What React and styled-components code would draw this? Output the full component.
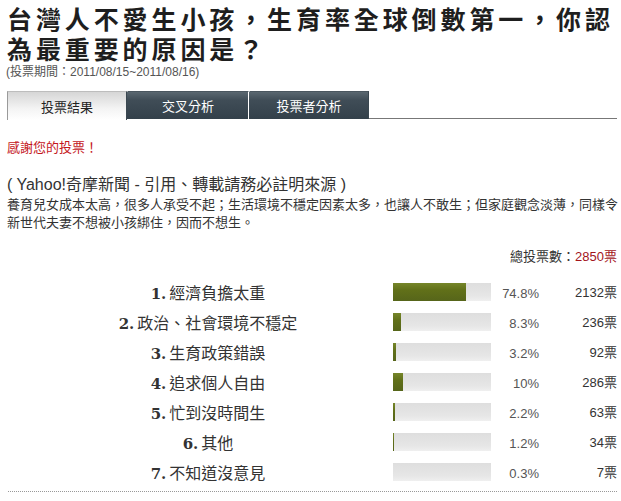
import React from "react";
import styled, { createGlobalStyle } from "styled-components";

const Global = createGlobalStyle`
  html, body { margin: 0; padding: 0; background: #fff; }
  body { font-family: "Liberation Sans", Arial, "Noto Sans CJK TC", sans-serif; color: #333; }
`;

const CJK = `"Liberation Sans", Arial, "Noto Sans CJK TC", sans-serif`;

const Page = styled.div`
  width: 621px;
  height: 501px;
  box-sizing: border-box;
  padding: 3px 4px 0 7px;
  overflow: hidden;
`;

const Title = styled.h1`
  margin: 0;
  width: 610px;
  font-family: "Noto Sans CJK TC", sans-serif;
  font-weight: 700;
  font-size: 25px;
  line-height: 30px;
  letter-spacing: 3.9px;
  color: #1e1e1e;
  word-break: break-all;
`;

const Line = styled.span`
  display: block;
  white-space: nowrap;
`;

const Period = styled.div`
  margin-top: 1px;
  font-family: ${CJK};
  font-size: 12px;
  line-height: 16px;
  color: #555;
  margin-left: -1px;
`;

const Tabs = styled.div`
  display: flex;
  margin-top: 11px;
  height: 29px;
`;

const Tab = styled.div`
  width: ${(p) => p.$w}px;
  box-sizing: border-box;
  display: flex;
  align-items: center;
  justify-content: center;
  font-family: ${CJK};
  font-size: 13px;
  color: ${(p) => (p.$active ? "#222" : "#fff")};
  background: ${(p) =>
    p.$active
      ? "linear-gradient(#d6d6d6, #f4f4f4 60%, #fff)"
      : "linear-gradient(#5a6770, #404d57 30%, #33404a)"};
  border-left: 1px solid ${(p) => (p.$active ? "#9a9a9a" : "transparent")};
  border-top: 1px solid ${(p) => (p.$active ? "#bdbdbd" : "#4a565f")};
  border-right: 1px solid ${(p) => (p.$sep ? "#fff" : "#3a4750")};
  height: ${(p) => (p.$active ? 29 : 28)}px;
`;

const TabFill = styled.div`
  flex: 1;
  border-bottom: 1px solid #777;
  height: 28px;
  box-sizing: border-box;
`;

const Thanks = styled.div`
  margin-top: 19px;
  font-family: ${CJK};
  font-size: 13px;
  line-height: 18px;
  color: #c4161c;
`;

const Source = styled.div`
  margin-top: 18px;
  font-family: ${CJK};
  font-size: 16px;
  line-height: 20px;
  color: #333;
`;

const Desc = styled.div`
  margin-top: 1px;
  font-family: ${CJK};
  font-size: 13px;
  line-height: 18px;
  color: #333;
`;

const Total = styled.div`
  margin-top: 16px;
  text-align: right;
  font-family: ${CJK};
  font-size: 13px;
  line-height: 18px;
  color: #333;
`;

const Red = styled.span`
  color: #a3141b;
`;

const Results = styled.div`
  margin-top: 11px;
  padding-left: 16px;
`;

const Row = styled.div`
  display: grid;
  grid-template-columns: 370px 98px 48px 1fr;
  align-items: center;
  height: 30px;
`;

const Label = styled.div`
  text-align: center;
  font-family: ${CJK};
  font-size: 16px;
  color: #333;
  white-space: nowrap;
`;

const Num = styled.b`
  font-family: "DejaVu Serif", "Liberation Serif", serif;
  font-weight: 700;
  font-size: 15px;
  color: #333;
  margin-right: 3px;
`;

const Bar = styled.div`
  height: 18px;
  background: linear-gradient(#dedede, #e6e6e6 70%, #efefef);
  overflow: hidden;
`;

const Fill = styled.div`
  height: 100%;
  background: linear-gradient(#76862a, #617019 40%, #56651a);
`;

const Pct = styled.div`
  text-align: right;
  font-family: ${CJK};
  font-size: 13px;
  color: #555;
  padding-top: 3px;
`;

const Votes = styled.div`
  text-align: right;
  font-family: ${CJK};
  font-size: 13px;
  color: #333;
  padding-bottom: 2px;
`;

const Dotted = styled.div`
  margin-top: 4px;
  margin-left: 1px;
  border-top: 1px dotted #999;
`;

const data = [
  ["經濟負擔太重", 74.8, "74.8%", "2132"],
  ["政治、社會環境不穩定", 8.3, "8.3%", "236"],
  ["生育政策錯誤", 3.2, "3.2%", "92"],
  ["追求個人自由", 10, "10%", "286"],
  ["忙到沒時間生", 2.2, "2.2%", "63"],
  ["其他", 1.2, "1.2%", "34"],
  ["不知道沒意見", 0.3, "0.3%", "7"],
];

export default function App() {
  return (
    <>
      <Global />
      <Page>
        <Title>台灣人不愛生小孩，生育率全球倒數第一，你認為最重要的原因是？</Title>
        <Period>(投票期間：2011/08/15~2011/08/16)</Period>
        <Tabs>
          <Tab $active $w={120}>投票結果</Tab>
          <Tab $w={122} $sep>交叉分析</Tab>
          <Tab $w={120}>投票者分析</Tab>
          <TabFill />
        </Tabs>
        <Thanks>感謝您的投票！</Thanks>
        <Source>( Yahoo!奇摩新聞 - 引用、轉載請務必註明來源 )</Source>
        <Desc>
          <Line>養育兒女成本太高，很多人承受不起；生活環境不穩定因素太多，也讓人不敢生；但家庭觀念淡薄，同樣令</Line>
          <Line>新世代夫妻不想被小孩綁住，因而不想生。</Line>
        </Desc>
        <Total>
          總投票數：<Red>2850票</Red>
        </Total>
        <Results>
          {data.map(([label, v, pct, votes], i) => (
            <Row key={i}>
              <Label>
                <Num>{i + 1}.</Num>
                {label}
              </Label>
              <Bar>
                <Fill style={{ width: `${v}%` }} />
              </Bar>
              <Pct>{pct}</Pct>
              <Votes>{votes}票</Votes>
            </Row>
          ))}
        </Results>
        <Dotted />
      </Page>
    </>
  );
}
